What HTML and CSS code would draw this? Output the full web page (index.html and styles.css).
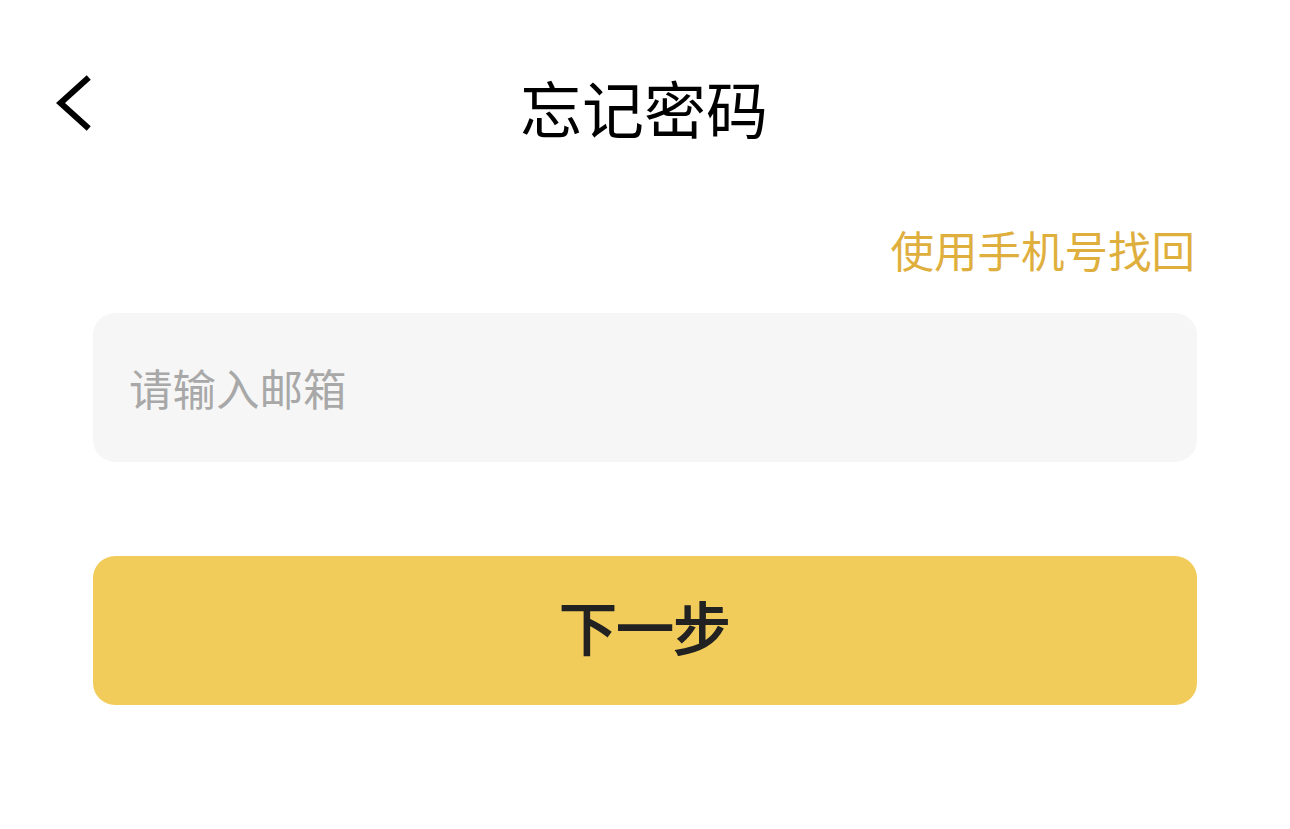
FILE: index.html
```html
<!DOCTYPE html>
<html lang="zh-CN">
<head>
<meta charset="utf-8">
<title>忘记密码</title>
<link rel="stylesheet" href="styles.css">
</head>
<body>
<div class="page">
  <header class="header">
    <div class="back">
      <svg class="back-icon" width="40" height="80" viewBox="0 0 40 80" aria-hidden="true">
        <path d="M31.5 9.5 L5.5 33 L31.5 56.5" fill="none" stroke="#000" stroke-width="6" stroke-linecap="square" stroke-linejoin="miter"/>
      </svg>
    </div>
    <h1 class="title">忘记密码</h1>
    <div class="spacer"></div>
  </header>
  <main class="form">
    <div class="alt-row"><a class="alt-link" href="#">使用手机号找回</a></div>
    <div class="field"><input class="input" type="text" placeholder="请输入邮箱"></div>
    <button class="next" type="button"><span class="next-label">下一步</span></button>
  </main>
</div>
</body>
</html>
```
FILE: styles.css
```css
html, body {
  margin: 0;
  padding: 0;
  background: #ffffff;
}
body {
  font-family: "Noto Sans CJK SC", "Noto Sans", sans-serif;
  width: 1290px;
  height: 829px;
  overflow: hidden;
}
.page {
  display: flex;
  flex-direction: column;
}
.header {
  height: 220px;
  display: grid;
  grid-template-columns: 1fr auto 1fr;
  align-items: center;
  padding-left: 55px;
  padding-right: 55px;
}
.back {
  display: flex;
  align-items: center;
}
.back-icon {
  display: block;
}
.title {
  margin: 0 0 6px 0;
  font-size: 62px;
  font-weight: 400;
  line-height: 1;
  color: #000;
  padding-right: 2px;
}
.form {
  padding: 0 93px;
  display: flex;
  flex-direction: column;
}
.alt-row {
  display: flex;
  justify-content: flex-end;
  margin-top: 8px;
}
.alt-link {
  font-size: 43.5px;
  line-height: 43px;
  color: #DFAF3E;
  text-decoration: none;
  margin-right: 2px;
}
.field {
  margin-top: 42px;
}
.input {
  box-sizing: border-box;
  width: 100%;
  height: 149px;
  border: none;
  outline: none;
  border-radius: 22px;
  background: #f6f6f6;
  padding: 0 0 0 36px;
  font-family: inherit;
  font-size: 43.5px;
  color: #333;
}
.input::placeholder {
  color: #a8a8a8;
}
.next {
  margin-top: 94px;
  height: 149px;
  width: 100%;
  border: none;
  border-radius: 22px;
  background: #F2CC5A;
  font-family: inherit;
  padding: 0 0 12px 0;
}
.next-label {
  font-size: 57px;
  font-weight: 400;
  color: #222;
  -webkit-text-stroke: 2px #222;
  paint-order: stroke fill;
}
```
